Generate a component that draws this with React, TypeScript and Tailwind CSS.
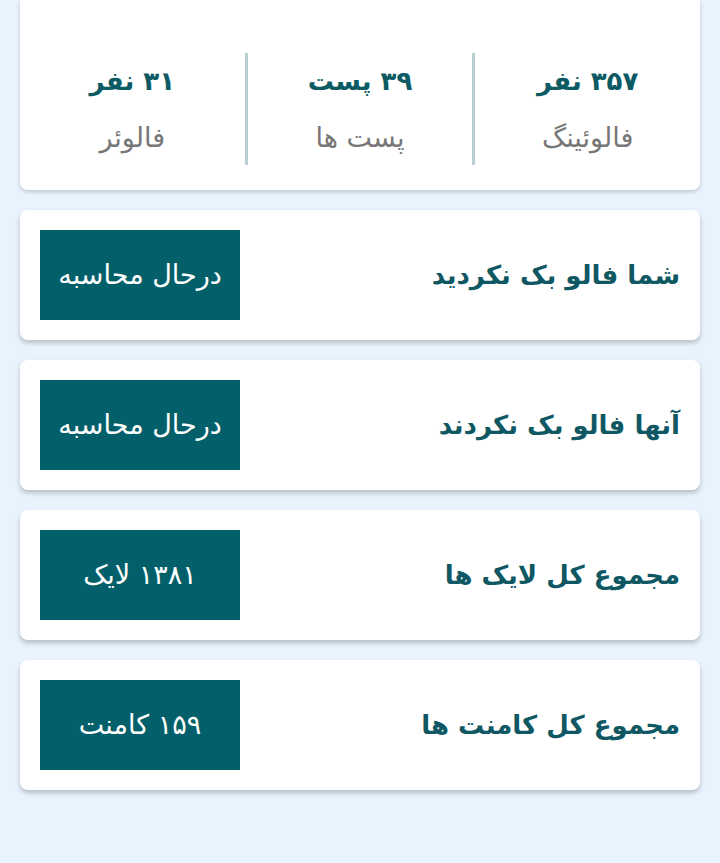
const STATS = [
  { value: "۳۵۷ نفر", label: "فالوئینگ" },
  { value: "۳۹ پست", label: "پست ها" },
  { value: "۳۱ نفر", label: "فالوئر" },
];

const ROWS = [
  { title: "شما فالو بک نکردید", value: "درحال محاسبه" },
  { title: "آنها فالو بک نکردند", value: "درحال محاسبه" },
  { title: "مجموع کل لایک ها", value: "۱۳۸۱ لایک" },
  { title: "مجموع کل کامنت ها", value: "۱۵۹ کامنت" },
];

export default function App() {
  return (
    <div
      dir="rtl"
      className="min-h-[863px] bg-[#e8f3fd] px-5 pb-10"
      style={{ fontFamily: '"DejaVu Sans", "Noto Sans", sans-serif' }}
    >
      <section className="flex rounded-b-lg bg-white pt-[53px] pb-[25px] shadow-[0_2px_4px_rgba(0,0,0,0.18)]">
        {STATS.map((stat, i) => (
          <div
            key={stat.label}
            className={`flex h-[112px] flex-1 flex-col items-center justify-center gap-[30px] ${
              i > 0 ? "border-r-[3px] border-[#b9cdd5]" : ""
            }`}
          >
            <span className="text-[26px] leading-none font-bold text-[#0c5a63]">
              {stat.value}
            </span>
            <span className="text-[27px] leading-none text-[#777777]">
              {stat.label}
            </span>
          </div>
        ))}
      </section>

      <div className="mt-5 flex flex-col gap-5">
        {ROWS.map((row) => (
          <div
            key={row.title}
            className="flex h-[130px] items-center justify-between rounded-lg bg-white px-5 shadow-[0_3px_5px_rgba(0,0,0,0.22)]"
          >
            <h2 className="text-[26px] font-bold text-[#0f5863]">{row.title}</h2>
            <div className="flex h-[90px] w-[200px] items-center justify-center bg-[#035f69] text-[27px] text-white">
              {row.value}
            </div>
          </div>
        ))}
      </div>
    </div>
  );
}
